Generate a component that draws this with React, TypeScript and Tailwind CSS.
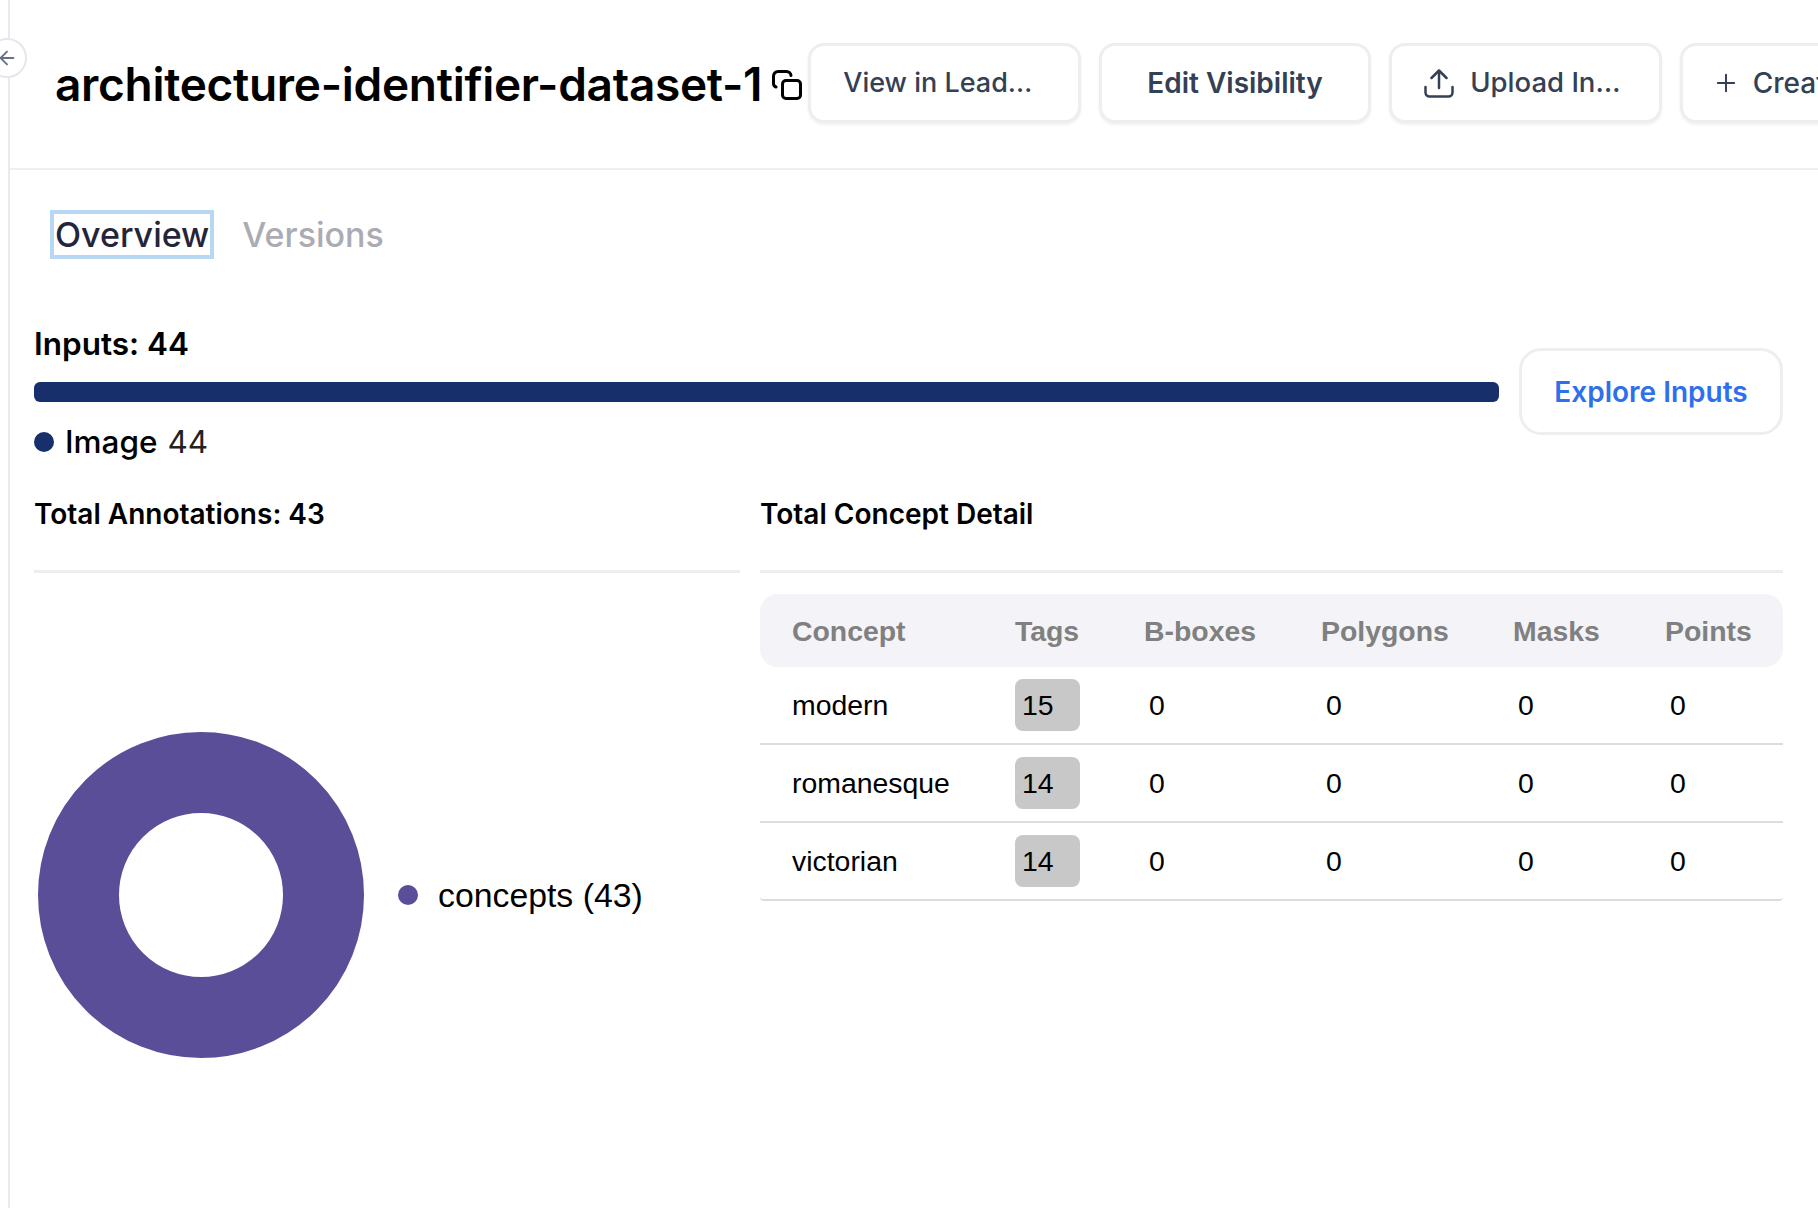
import { ArrowLeft, Plus } from "lucide-react";

const rows = [
    { concept: "modern", tags: 15 },
    { concept: "romanesque", tags: 14 },
    { concept: "victorian", tags: 14 },
];

const tableCols = "grid grid-cols-[223px_129px_177px_192px_152px_1fr] pl-8";

const HeaderButton = ({ children, className }: { children: React.ReactNode, className?: string }) => (
    <button
        className={"flex h-[80px] w-[272.500px] shrink-0 items-center whitespace-nowrap rounded-[16px] border-[3px] border-[#eeeeee] bg-white text-[#344054] shadow-[0_2px_3px_rgba(16,24,40,0.06)]" + ` ${className}`}
    >
        {children}
    </button>
);

const CopyIcon = () => (
    <svg width="30" height="30" viewBox="0 0 30 30" fill="none" stroke="#000" strokeWidth="3" strokeLinecap="round" strokeLinejoin="round" className="ml-[10px] mt-[3px] shrink-0">
        <path d="M4 17C2.5 16.5 1.5 15 1.5 13.5V6A4.5 4.5 0 0 1 6 1.5h8.5A4.5 4.5 0 0 1 19 5.5" />
        <rect x="10.5" y="10.5" width="18" height="18" rx="3.5" />
    </svg>
);

const UploadIcon = () => (
    <svg width="30" height="29" viewBox="0 0 30 29" fill="none" stroke="#344054" strokeWidth="2.5" strokeLinecap="round" strokeLinejoin="round" className="shrink-0">
        <path d="M1.5 18v5.5a4 4 0 0 0 4 4h19a4 4 0 0 0 4-4V18" />
        <path d="M15 2v17" />
        <path d="M7.5 9L15 1.5 22.500 9" />
    </svg>
);

const Donut = () => (
    <svg width="326" height="326" viewBox="0 0 326 326" className="shrink-0">
        <circle cx="163" cy="163" r="122.5" fill="none" stroke="#5b4e99" strokeWidth="81" />
    </svg>
);

export default function App() {
    return (
        <div className="relative h-[1208px] w-[1818px] overflow-hidden bg-white font-['Inter',sans-serif] text-black">
            <div className="ml-2 h-full border-l-2 border-[#e9e9ef]">
                <header className="flex h-[170px] items-center border-b-2 border-[#eeeeee] pb-[2px] pl-[45px]">
                    <h1 className="mt-[2px] whitespace-nowrap text-[46px] font-semibold leading-none tracking-[-0.3px]">architecture-identifier-dataset-1</h1>
                    <CopyIcon />
                    <div className="ml-[6px] flex gap-[18px]">
                        <HeaderButton className="pl-8 text-[27px] font-medium">View in Lead…</HeaderButton>
                        <HeaderButton className="justify-center text-[28px] font-semibold">Edit Visibility</HeaderButton>
                        <HeaderButton className="gap-[16px] pl-8 text-[27.500px] font-medium"><UploadIcon />Upload In…</HeaderButton>
                        <HeaderButton className="gap-[13px] pl-[29px] text-[28px] font-medium"><Plus size={28} strokeWidth={1.7} />Create…</HeaderButton>
                    </div>
                </header>

                <div className="flex items-center gap-[28px] pl-[45px] pt-[40px]">
                    <span className="-ml-[5px] border-[4px] border-[#b7d7f2] px-[1px] text-[34px] font-medium leading-[41px] text-[#25253a]">Overview</span>
                    <span className="text-[34px] font-medium leading-[41px] text-[#abacb3]">Versions</span>
                </div>

                <div className="px-[24px] pt-[66px]">
                    <div className="flex items-start gap-[20px] pr-[11px]">
                        <div className="flex-1">
                            <div className="text-[31.500px] font-semibold leading-[38px]">Inputs: 44</div>
                            <div className="mt-[19px] h-5 rounded-[6px] bg-[#17306b]" />
                            <div className="mt-[21px] flex items-center gap-[11px] text-[31.500px] leading-[38px]">
                                <span className="h-5 w-5 rounded-full bg-[#17306b]" />
                                <span className="font-medium">Image</span>
                                <span className="-ml-[1px] font-normal text-[#222]">44</span>
                            </div>
                        </div>
                        <button className="mt-[23px] h-[87px] w-[264px] shrink-0 rounded-[22px] border-[3px] border-[#eeeeee] bg-white text-[28px] font-semibold text-[#2f6fed]">Explore Inputs</button>
                    </div>

                    <div className="mt-[36px] flex gap-5 pr-[11px]">
                        <div className="w-[706px] shrink-0">
                            <div className="border-b-[3px] border-[#eeeeee] pb-[39px] text-[28px] font-semibold leading-[34px]">Total Annotations: 43</div>
                            <div className="mt-[159px] flex items-center gap-[34px] pl-1">
                                <Donut />
                                <div className="flex items-center gap-5 font-['Liberation_Sans',sans-serif] text-[33.800px] leading-[38px]">
                                    <span className="h-5 w-5 rounded-full bg-[#5b4e99]" />
                                    concepts (43)
                                </div>
                            </div>
                        </div>

                        <div className="flex-1">
                            <div className="border-b-[3px] border-[#eeeeee] pb-[39px] text-[28px] font-semibold leading-[34px]">Total Concept Detail</div>
                            <div className="mt-[21px] overflow-hidden rounded-b-[4px] border-b-2 border-[#dddddd] font-['Liberation_Sans',sans-serif] text-[28.400px]">
                                <div className={tableCols + " h-[73px] items-center rounded-[18px] bg-[#f3f3f8] pt-[2px] font-bold text-[#808080]"}>
                                    <span>Concept</span>
                                    <span>Tags</span>
                                    <span>B-boxes</span>
                                    <span>Polygons</span>
                                    <span>Masks</span>
                                    <span>Points</span>
                                </div>
                                {rows.map((row, i) => (
                                    <div
                                        key={row.concept}
                                        className={tableCols + " items-center " + (i < rows.length - 1 ? "h-[78px] border-b-2 border-[#dddddd]" : "h-[76px]")}
                                    >
                                        <span className="pt-[1px]">{row.concept}</span>
                                        <span className="flex h-[52px] w-[65px] items-center rounded-[8px] bg-[#c8c8c8] pl-[7px] pt-[1px]">{row.tags}</span>
                                        {[0, 1, 2, 3].map((n) => (
                                            <span key={n} className="pl-[5px] pt-[1px]">0</span>
                                        ))}
                                    </div>
                                ))}
                            </div>
                        </div>
                    </div>
                </div>
            </div>

            <div className="absolute left-[-13px] top-[38px] flex h-[40px] w-[40px] items-center justify-center rounded-full border-2 border-[#e6e7ee] bg-white text-[#667085]">
                <ArrowLeft size={22} strokeWidth={2} />
            </div>
        </div>
    );
}
